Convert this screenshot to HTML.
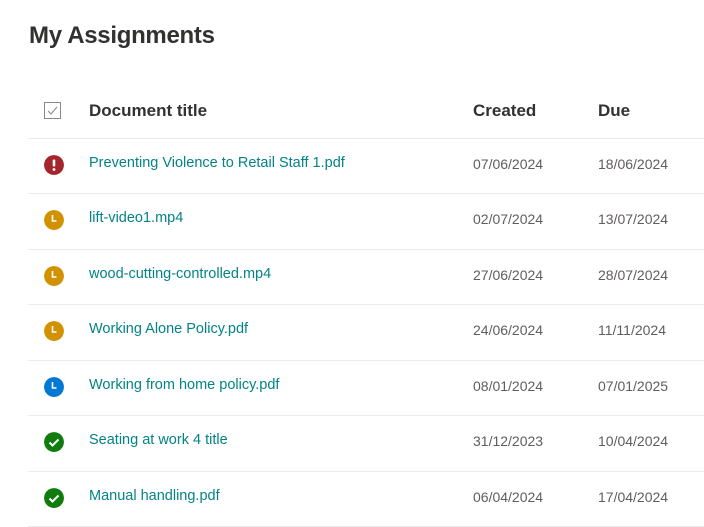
<!DOCTYPE html>
<html><head><style>
body{margin:0;width:704px;height:527px;overflow:hidden;background:#fff;font-family:"Segoe UI","Liberation Sans",sans-serif;color:#323130;position:relative}
h1{position:absolute;left:29px;top:22px;margin:0;font-size:24px;font-weight:600;letter-spacing:-0.3px}
.hd{position:absolute;top:101px;font-size:17px;font-weight:600;color:#323130}
.line{position:absolute;left:28px;right:0;height:1px;background:#edebe9}
.row{position:absolute;left:0;right:0;height:55px}
.ic{position:absolute;left:44px;top:17px;width:20px;height:20px;border-radius:50%}
.t{position:absolute;left:89px;top:17px;font-size:14.5px;color:#038387}
.d{position:absolute;top:18px;font-size:14px;color:#605e5c}
</style></head><body>
<h1>My Assignments</h1>
<svg style="position:absolute;left:44px;top:102px" width="17" height="17"><rect x="0.5" y="0.5" width="16" height="16" fill="none" stroke="#8a8886"/><path d="M4 9l3 3 6-7" fill="none" stroke="#8a8886" stroke-width="1"/></svg>
<div class="hd" style="left:89px">Document title</div>
<div class="hd" style="left:473px">Created</div>
<div class="hd" style="left:598px">Due</div>
<div class="line" style="top:138px"></div>

<div class="row" style="top:138px"><svg class="ic" viewBox="0 0 20 20"><circle cx="10" cy="10" r="10" fill="#a4262c"/><rect x="8.7" y="4.5" width="2.6" height="7" rx="1" fill="#fff"/><circle cx="10" cy="14.5" r="1.4" fill="#fff"/></svg><div class="t">Preventing Violence to Retail Staff 1.pdf</div><div class="d" style="left:473px">07/06/2024</div><div class="d" style="left:598px">18/06/2024</div></div>
<div class="line" style="top:193px"></div>

<div class="row" style="top:193px"><svg class="ic" viewBox="0 0 20 20"><circle cx="10" cy="10" r="10" fill="#d29200"/><path d="M8.5 5v6h4" fill="none" stroke="#fff" stroke-width="1.6"/></svg><div class="t">lift-video1.mp4</div><div class="d" style="left:473px">02/07/2024</div><div class="d" style="left:598px">13/07/2024</div></div>
<div class="line" style="top:249px"></div>

<div class="row" style="top:249px"><svg class="ic" viewBox="0 0 20 20"><circle cx="10" cy="10" r="10" fill="#d29200"/><path d="M8.5 5v6h4" fill="none" stroke="#fff" stroke-width="1.6"/></svg><div class="t">wood-cutting-controlled.mp4</div><div class="d" style="left:473px">27/06/2024</div><div class="d" style="left:598px">28/07/2024</div></div>
<div class="line" style="top:304px"></div>

<div class="row" style="top:304px"><svg class="ic" viewBox="0 0 20 20"><circle cx="10" cy="10" r="10" fill="#d29200"/><path d="M8.5 5v6h4" fill="none" stroke="#fff" stroke-width="1.6"/></svg><div class="t">Working Alone Policy.pdf</div><div class="d" style="left:473px">24/06/2024</div><div class="d" style="left:598px">11/11/2024</div></div>
<div class="line" style="top:360px"></div>

<div class="row" style="top:360px"><svg class="ic" viewBox="0 0 20 20"><circle cx="10" cy="10" r="10" fill="#0078d4"/><path d="M8.5 5v6h4" fill="none" stroke="#fff" stroke-width="1.6"/></svg><div class="t">Working from home policy.pdf</div><div class="d" style="left:473px">08/01/2024</div><div class="d" style="left:598px">07/01/2025</div></div>
<div class="line" style="top:415px"></div>

<div class="row" style="top:415px"><svg class="ic" viewBox="0 0 20 20"><circle cx="10" cy="10" r="10" fill="#107c10"/><path d="M5.5 10.5l3 3 6-6" fill="none" stroke="#fff" stroke-width="2"/></svg><div class="t">Seating at work 4 title</div><div class="d" style="left:473px">31/12/2023</div><div class="d" style="left:598px">10/04/2024</div></div>
<div class="line" style="top:471px"></div>

<div class="row" style="top:471px"><svg class="ic" viewBox="0 0 20 20"><circle cx="10" cy="10" r="10" fill="#107c10"/><path d="M5.5 10.5l3 3 6-6" fill="none" stroke="#fff" stroke-width="2"/></svg><div class="t">Manual handling.pdf</div><div class="d" style="left:473px">06/04/2024</div><div class="d" style="left:598px">17/04/2024</div></div>
<div class="line" style="top:526px"></div>
</body></html>
